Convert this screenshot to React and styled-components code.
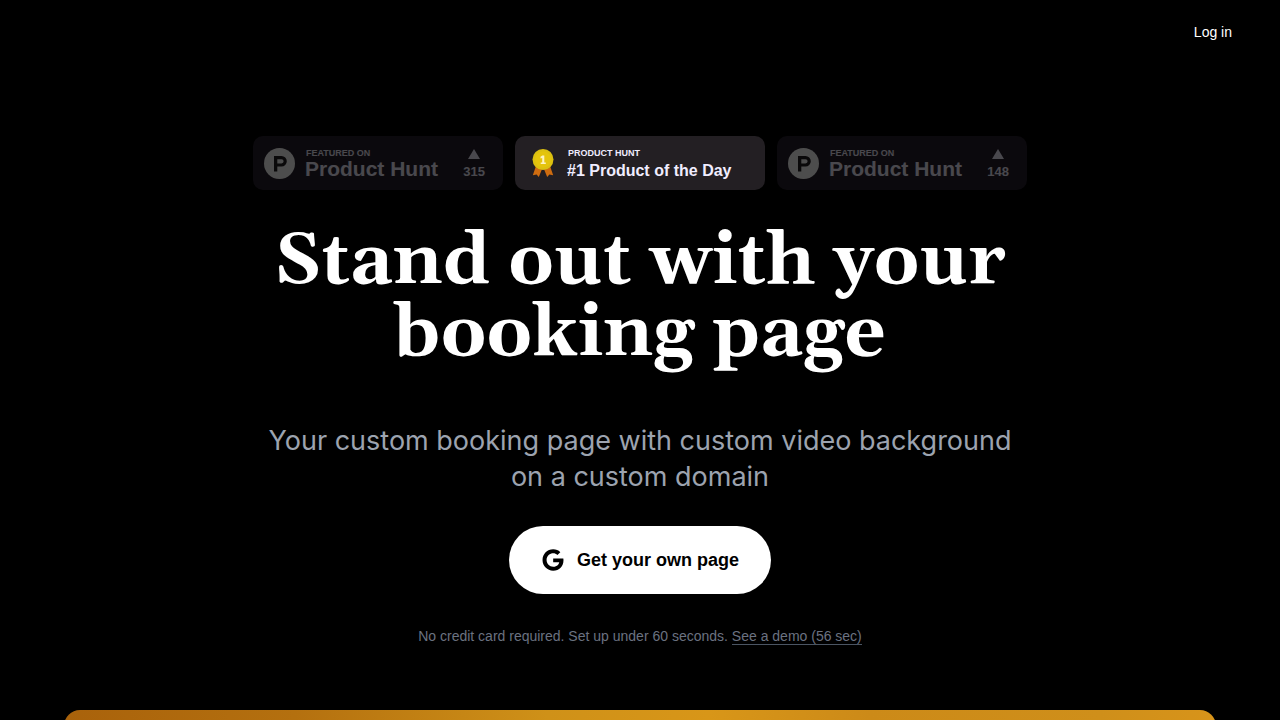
import React from "react";
import styled, { createGlobalStyle } from "styled-components";
import { FaGoogle } from "react-icons/fa";

const GlobalStyle = createGlobalStyle`
  * {
    box-sizing: border-box;
  }
  body {
    margin: 0;
    background: #000;
    color: #fff;
    font-family: "Liberation Sans", Arial, sans-serif;
  }
`;

const Header = styled.header`
  display: flex;
  justify-content: flex-end;
  padding: 22px 48px;
`;

const LoginLink = styled.a`
  color: #fff;
  font-size: 14px;
  line-height: 20px;
  text-decoration: none;
`;

const Hero = styled.main`
  display: flex;
  flex-direction: column;
  align-items: center;
  padding: 72px 64px 64px;
  text-align: center;
`;

const Badges = styled.div`
  display: flex;
  flex-wrap: wrap;
  justify-content: center;
  gap: 12px;
`;

const Badge = styled.a`
  display: flex;
  align-items: center;
  width: 250px;
  height: 54px;
  padding: 0 18px 0 ${(props) => (props.$dimmed ? "11px" : "17px")};
  gap: ${(props) => (props.$dimmed ? "10px" : "13px")};
  border-radius: 10px;
  background: ${(props) => (props.$dimmed ? "#261f2b" : "#231f23")};
  color: #f0edff;
  font-family: "Liberation Sans", Helvetica, Arial, sans-serif;
  font-weight: 700;
  text-align: left;
  text-decoration: none;
  opacity: ${(props) => (props.$dimmed ? 0.3 : 1)};
`;

const BadgeText = styled.span`
  display: flex;
  flex-direction: column;
  flex: 1;
  padding-top: ${(props) => (props.$award ? "6px" : "2px")};
`;

const BadgeLabel = styled.span`
  padding-left: 1px;
  font-size: 9px;
  line-height: 10px;
`;

const BadgeTitle = styled.span`
  font-size: ${(props) => (props.$large ? "21px" : "16px")};
  line-height: ${(props) => (props.$large ? "22px" : "26px")};
  white-space: nowrap;
`;

const Votes = styled.span`
  display: flex;
  flex-direction: column;
  align-items: center;
  gap: 5px;
  padding-top: 2px;
  font-size: 13px;
  line-height: 16px;
`;

const Title = styled.h1`
  max-width: 768px;
  margin: 36px 0 0;
  font-family: Gelasio, Georgia, "DejaVu Serif", serif;
  font-size: 72px;
  font-weight: 700;
  line-height: 72px;
`;

const Subtitle = styled.p`
  max-width: 768px;
  margin: 53px 0 0;
  color: #9ca3af;
  font-family: Inter, sans-serif;
  font-size: 27px;
  font-weight: 400;
  line-height: 36px;
`;

const StartButton = styled.button`
  display: flex;
  align-items: center;
  gap: 12px;
  height: 68px;
  margin-top: 31px;
  padding: 0 32px;
  border: 0;
  border-radius: 34px;
  background: #fff;
  color: #000;
  font-family: inherit;
  font-size: 18px;
  font-weight: 700;
  cursor: pointer;
  &:hover {
    background: #e5e7eb;
  }
`;

const GoogleIcon = styled(FaGoogle)`
  width: 24px;
  height: 24px;
  padding: 1px;
`;

const Note = styled.p`
  margin: 32px 0 0;
  color: #6b7280;
  font-size: 14px;
  line-height: 20px;
`;

const DemoLink = styled.a`
  border-bottom: 1px solid #4b5563;
  color: inherit;
  text-decoration: none;
`;

const Preview = styled.section`
  width: 100%;
  max-width: 1152px;
  margin-top: 64px;
  aspect-ratio: 16 / 9;
  border-radius: 16px;
  background: linear-gradient(
    90deg,
    #a9620b 0%,
    #b4700f 20%,
    #cf9118 42%,
    #d89618 56%,
    #cc8a18 70%,
    #cf8f1a 90%,
    #d8941a 100%
  );
`;

function ProductHuntLogo() {
  return (
    <svg width="31" height="31" viewBox="0 0 31 31" aria-hidden="true">
      <circle cx="15.5" cy="15.5" r="15.5" fill="#fff" />
      <path
        fill="#231f23"
        fillRule="evenodd"
        d="M10 8h7.500a5.300 5.300 0 0 1 0 10.600h-4.200V23.500H10zM13.300 11.200v4.200h4.200a2.100 2.100 0 0 0 0-4.200z"
      />
    </svg>
  );
}

function Medal() {
  return (
    <svg width="22" height="28" viewBox="0 0 22 28" aria-hidden="true">
      <path fill="#cf6c10" d="M4 17 0.800 26.200 4.600 25.600 6.800 28 10.500 19z" />
      <path fill="#cf6c10" d="M18 17 21.200 26.200 17.400 25.600 15.200 28 11.500 19z" />
      <circle cx="11" cy="10.500" r="10.500" fill="#dcc010" />
      <circle cx="11" cy="10.500" r="8" fill="#e5c40c" />
      <path
        fill="#fff3c0"
        d="M10.300 6.500h2v6.900h1.500v1.600H8.700v-1.600h1.500V8.900l-1.700.6V7.800z"
      />
    </svg>
  );
}

function FeaturedBadge({ votes }) {
  return (
    <Badge href="#" $dimmed>
      <ProductHuntLogo />
      <BadgeText>
        <BadgeLabel>FEATURED ON</BadgeLabel>
        <BadgeTitle $large>Product Hunt</BadgeTitle>
      </BadgeText>
      <Votes>
        <svg width="12" height="10" viewBox="0 0 12 10" aria-hidden="true">
          <path fill="currentColor" d="M6 0l6 10H0z" />
        </svg>
        {votes}
      </Votes>
    </Badge>
  );
}

export default function App() {
  return (
    <>
      <GlobalStyle />
      <Header>
        <LoginLink href="#">Log in</LoginLink>
      </Header>
      <Hero>
        <Badges>
          <FeaturedBadge votes={315} />
          <Badge href="#">
            <Medal />
            <BadgeText $award>
              <BadgeLabel>PRODUCT HUNT</BadgeLabel>
              <BadgeTitle>#1 Product of the Day</BadgeTitle>
            </BadgeText>
          </Badge>
          <FeaturedBadge votes={148} />
        </Badges>
        <Title>Stand out with your booking page</Title>
        <Subtitle>
          Your custom booking page with custom video background on a custom
          domain
        </Subtitle>
        <StartButton type="button">
          <GoogleIcon />
          Get your own page
        </StartButton>
        <Note>
          No credit card required. Set up under 60 seconds.{" "}
          <DemoLink href="#demo">See a demo (56 sec)</DemoLink>
        </Note>
        <Preview id="demo" />
      </Hero>
    </>
  );
}
